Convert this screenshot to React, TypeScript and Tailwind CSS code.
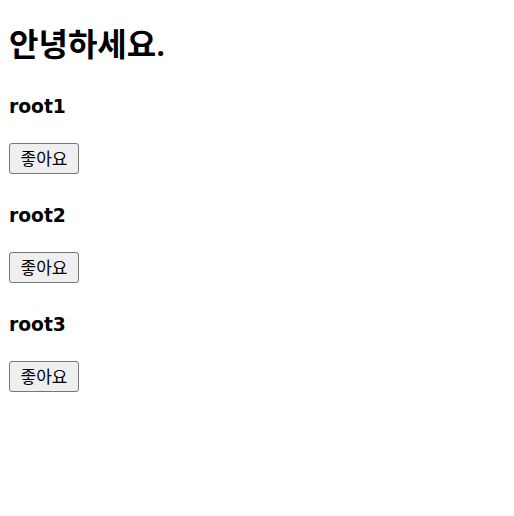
import React from "react";

const roots = ["root1", "root2", "root3"];

const LikeButton: React.FC = () => {
  return (
    <div className="h-[30px]">
      <button className="h-[31px] w-[70px] rounded-[3px] border border-[#767676] bg-[#efefef] text-[17px] font-normal leading-none text-black">
        좋아요
      </button>
    </div>
  );
};

export default function App() {
  return (
    <div className="min-h-[516px] bg-white px-[9px] text-black [font-family:'Noto_Sans','Noto_Sans_CJK_KR',sans-serif]">
      <h1 className="pt-[24px] text-[32px] font-semibold leading-[40px]">안녕하세요.</h1>
      {roots.map((name) => (
        <div key={name} className="flex flex-col">
          <h3 className="mt-[28px] mb-[21px] text-[18.72px] font-bold leading-[30px] [font-family:'DejaVu_Sans',sans-serif]">
            {name}
          </h3>
          <LikeButton />
        </div>
      ))}
    </div>
  );
}
